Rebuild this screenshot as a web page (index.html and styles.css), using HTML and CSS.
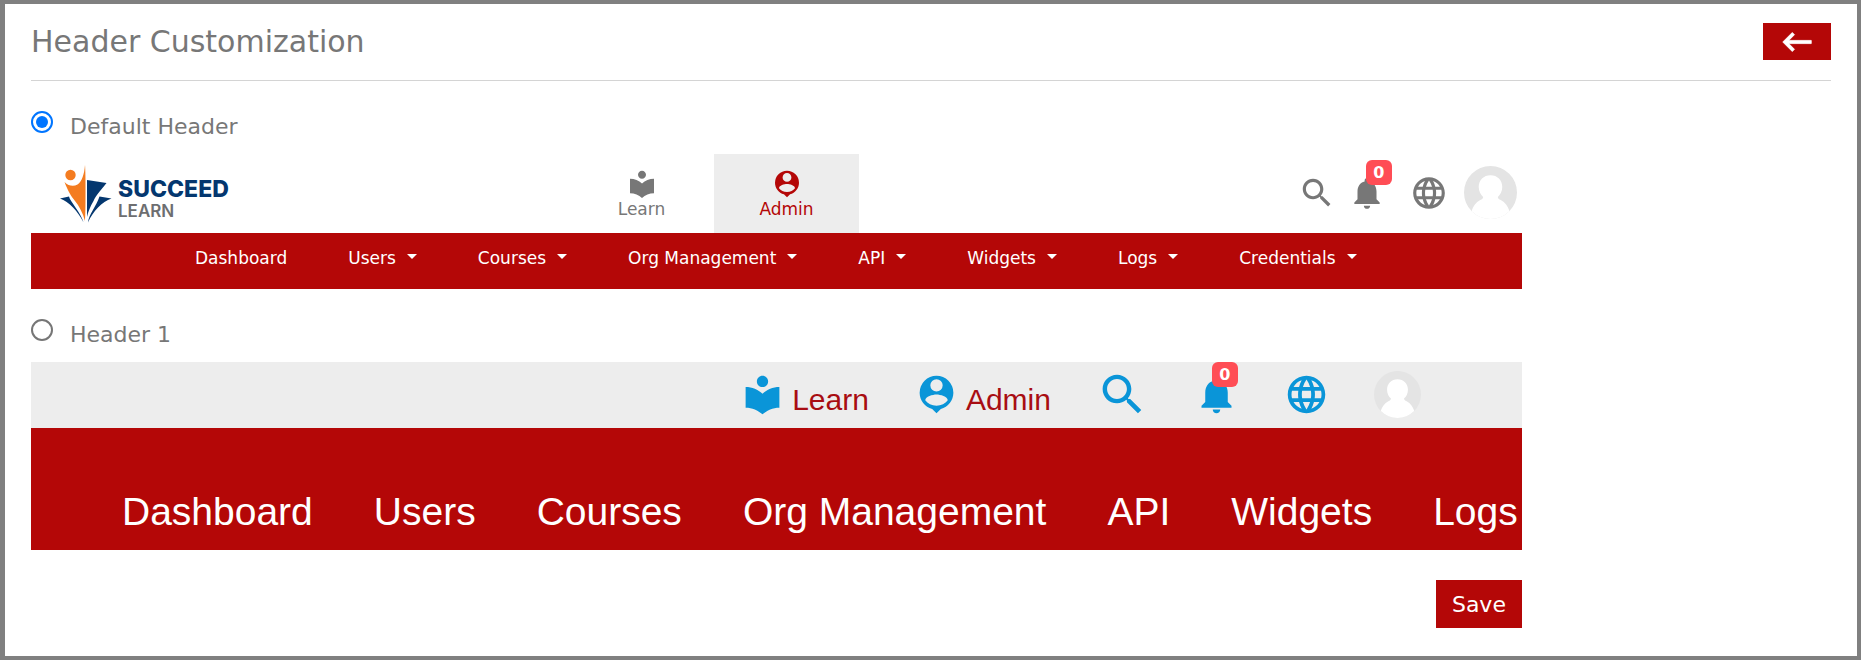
FILE: index.html
```html
<!DOCTYPE html>
<html lang="en">
<head>
<meta charset="utf-8">
<title>Header Customization</title>
<link rel="stylesheet" href="styles.css">
</head>
<body>
<svg class="sprite" aria-hidden="true">
  <symbol id="i-learn" viewBox="0 0 24 24"><path d="M12 11.55C9.64 9.35 6.48 8 3 8v11c3.48 0 6.64 1.35 9 3.55 2.36-2.19 5.52-3.55 9-3.55V8c-3.48 0-6.64 1.35-9 3.55zM12 8c1.66 0 3-1.34 3-3s-1.34-3-3-3-3 1.34-3 3 1.34 3 3 3z"/></symbol>
  <symbol id="i-admin" viewBox="0 0 24 24"><path fill-rule="evenodd" d="M12 2a9 9 0 0 0-9 9c0 4.170 2.840 7.670 6.690 8.690L12 22l2.310-2.310C18.160 18.670 21 15.170 21 11a9 9 0 0 0-9-9zm0 1.800a3.300 3.300 0 1 1 0 6.600 3.300 3.300 0 0 1 0-6.600zM12 18c-2.500 0-4.710-1.100-6-2.900.03-1.990 4-3.080 6-3.080s5.970 1.090 6 3.080C16.710 16.900 14.500 18 12 18z"/></symbol>
  <symbol id="i-search" viewBox="0 0 24 24"><path d="M15.5 14h-.79l-.28-.27C15.41 12.59 16 11.11 16 9.500 16 5.910 13.090 3 9.500 3S3 5.910 3 9.500 5.910 16 9.500 16c1.610 0 3.090-.59 4.230-1.570l.27.28v.79l5 4.990L20.490 19l-4.990-5zm-6 0C7.010 14 5 11.990 5 9.500S7.010 5 9.500 5 14 7.010 14 9.500 11.990 14 9.500 14z"/></symbol>
  <symbol id="i-bell" viewBox="0 0 24 24"><path d="M12 22c1.100 0 2-.9 2-2h-4c0 1.100.89 2 2 2zm6-6v-5c0-3.070-1.640-5.640-4.500-6.320V4c0-.83-.67-1.500-1.500-1.500s-1.500.67-1.500 1.500v.68C7.630 5.360 6 7.920 6 11v5l-2 2v1h16v-1l-2-2z"/></symbol>
  <symbol id="i-globe" viewBox="0 0 24 24"><path d="M11.99 2C6.47 2 2 6.48 2 12s4.47 10 9.99 10C17.52 22 22 17.52 22 12S17.52 2 11.99 2zm6.93 6h-2.95c-.32-1.25-.78-2.45-1.38-3.56 1.84.63 3.37 1.91 4.33 3.56zM12 4.04c.83 1.2 1.48 2.53 1.91 3.96h-3.820c.43-1.430 1.080-2.760 1.910-3.960zM4.26 14C4.1 13.36 4 12.69 4 12s.1-1.360.26-2h3.380c-.08.66-.14 1.320-.14 2 0 .68.06 1.340.14 2H4.26zm.82 2h2.950c.32 1.250.78 2.450 1.380 3.560-1.840-.63-3.370-1.900-4.330-3.560zm2.950-8H5.08c.96-1.660 2.490-2.930 4.330-3.560C8.810 5.550 8.350 6.750 8.030 8zM12 19.960c-.83-1.200-1.480-2.530-1.910-3.960h3.820c-.43 1.430-1.080 2.760-1.910 3.960zM14.340 14H9.660c-.09-.66-.16-1.320-.16-2 0-.68.07-1.350.16-2h4.680c.09.65.16 1.320.16 2 0 .68-.07 1.340-.16 2zm.25 5.560c.6-1.110 1.060-2.310 1.380-3.560h2.950c-.96 1.650-2.490 2.930-4.330 3.560zM16.360 14c.08-.66.14-1.320.14-2 0-.68-.06-1.340-.14-2h3.380c.16.64.26 1.310.26 2s-.1 1.360-.26 2h-3.380z"/></symbol>
  <symbol id="i-avatar" viewBox="0 0 54 54"><clipPath id="avatar-clip"><circle cx="27" cy="27" r="27"/></clipPath><g clip-path="url(#avatar-clip)"><path fill="#e4e4e4" d="M0 0h54v54H0z"/><path fill="#fff" d="M27 9.500c7 0 12 5 12 12 0 4.500-2 8-4.500 10 0 1.500 1 2.200 3 3.200 4.500 2.300 7 6.300 8.500 10.300V54H8v-9c1.500-4 4-8 8.500-10.300 2-1 3-1.700 3-3.200-2.500-2-4.500-5.500-4.500-10 0-7 5-12 12-12z"/></g></symbol>
</svg>
<main class="page">
  <header class="page-head">
    <h1 class="page-title">Header Customization</h1>
    <button class="back" type="button" aria-label="Back">
      <svg class="back-icon" viewBox="0 0 24 24"><path d="M21 11H6.830l3.580-3.590L9 6l-6 6 6 6 1.410-1.410L6.830 13H21z"/></svg>
    </button>
  </header>
  <form class="options">
    <div class="choice">
      <input class="choice-radio" type="radio" name="header" id="header-default" checked>
      <label class="choice-label" for="header-default">Default Header</label>
    </div>
    <section class="preview">
      <div class="top-bar">
        <div class="logo">
          <svg class="logo-mark" viewBox="0 0 52 58">
            <circle cx="10.500" cy="10" r="5.200" fill="#f47c20"/>
            <path fill="#f47c20" d="M25 0c.8 6 .8 50 0 56C23 48 19 41 15 36 11 31 8 26 4.500 17c4 4 9 5 13 2.500C22 16.500 24.300 9 25 0z"/>
            <path fill="#04376f" d="M27 15l19.500 3C42 24 36 30 33.500 36 30 42 28 47 27 52z"/>
            <path fill="#04376f" d="M0 33.500l9-2c1 5 12 16 14.500 26C18 46 9 37 0 33.500zM51.500 33.500l-12-2C36 42 29 49 28 57.500 33 46 42 37 51.500 33.500z"/>
          </svg>
          <div class="logo-text"><span class="logo-name">SUCCEED</span><span class="logo-sub">LEARN</span></div>
        </div>
        <nav class="tabs">
          <a class="tab" href="#"><svg class="icon-tab"><use href="#i-learn"/></svg>Learn</a>
          <a class="tab tab-active" href="#"><svg class="icon-tab"><use href="#i-admin"/></svg>Admin</a>
        </nav>
        <div class="tools">
          <svg class="icon-tool"><use href="#i-search"/></svg>
          <span class="bell"><svg class="icon-tool"><use href="#i-bell"/></svg><span class="badge">0</span></span>
          <svg class="icon-tool tool-globe"><use href="#i-globe"/></svg>
          <svg class="avatar"><use href="#i-avatar"/></svg>
        </div>
      </div>
      <nav class="menu">
        <a class="menu-link" href="#">Dashboard</a>
        <a class="menu-link caret" href="#">Users</a>
        <a class="menu-link caret" href="#">Courses</a>
        <a class="menu-link caret" href="#">Org Management</a>
        <a class="menu-link caret" href="#">API</a>
        <a class="menu-link caret" href="#">Widgets</a>
        <a class="menu-link caret" href="#">Logs</a>
        <a class="menu-link caret" href="#">Credentials</a>
      </nav>
    </section>
    <div class="choice">
      <input class="choice-radio" type="radio" name="header" id="header-one">
      <label class="choice-label" for="header-one">Header 1</label>
    </div>
    <section class="preview preview-large">
      <div class="strip">
        <a class="strip-link" href="#"><svg class="icon-strip"><use href="#i-learn"/></svg><span class="strip-text">Learn</span></a>
        <a class="strip-link" href="#"><svg class="icon-strip"><use href="#i-admin"/></svg><span class="strip-text">Admin</span></a>
        <svg class="icon-search"><use href="#i-search"/></svg>
        <span class="bell"><svg class="icon-strip"><use href="#i-bell"/></svg><span class="badge">0</span></span>
        <svg class="icon-strip"><use href="#i-globe"/></svg>
        <svg class="avatar-small"><use href="#i-avatar"/></svg>
      </div>
      <nav class="big-menu">
        <a class="big-link" href="#">Dashboard</a>
        <a class="big-link" href="#">Users</a>
        <a class="big-link" href="#">Courses</a>
        <a class="big-link" href="#">Org Management</a>
        <a class="big-link" href="#">API</a>
        <a class="big-link" href="#">Widgets</a>
        <a class="big-link" href="#">Logs</a>
      </nav>
    </section>
    <div class="actions"><button class="save" type="submit">Save</button></div>
  </form>
</main>
</body>
</html>
```
FILE: styles.css
```css
* { box-sizing: border-box; }
body {
  margin: 0;
  color: #777;
  background: #fff;
  font-family: Verdana, "DejaVu Sans", sans-serif;
}
a { color: inherit; text-decoration: none; }
svg { display: block; flex: none; fill: currentColor; }
.sprite { position: absolute; width: 0; height: 0; }

.page {
  min-height: 100vh;
  padding: 19px 26px 28px;
  border: 4px solid #808080;
  border-left-width: 5px;
}
.page-head {
  display: flex;
  justify-content: space-between;
  align-items: center;
  padding-bottom: 20px;
  border-bottom: 1px solid #d4d4d4;
}
.page-title { margin: 0; padding-top: 1px; font-size: 30px; line-height: 36px; font-weight: 400; }
.back {
  display: flex;
  justify-content: center;
  align-items: center;
  width: 68px;
  height: 37px;
  padding: 0;
  border: 0;
  color: #fff;
  background: #b40707;
}
.back-icon { width: 38px; height: 38px; stroke: #fff; stroke-width: 0.5; }

.options { width: 82.83%; }
.choice { display: flex; align-items: flex-start; gap: 17px; padding: 30px 0 13px; }
.choice-radio {
  appearance: none;
  width: 22px;
  height: 22px;
  margin: 0;
  padding: 3px;
  border: 2px solid #767676;
  border-radius: 50%;
  background: #fff content-box;
}
.choice-radio::before {
  content: "";
  display: block;
  height: 100%;
  border-radius: 50%;
}
.choice-radio:checked { border-color: #0075ff; }
.choice-radio:checked::before { background: #0075ff; }
.choice-label { padding-top: 2px; font-size: 22px; line-height: 28px; }
.preview { overflow: hidden; }

.top-bar {
  display: grid;
  grid-template-columns: 538px auto 1fr;
  align-items: center;
}
.logo { display: flex; align-items: center; padding-left: 29px; gap: 6px; }
.logo-mark { width: 52px; height: 58px; }
.logo-text { display: flex; flex-direction: column; padding-top: 11px; font-family: Inter, sans-serif; }
.logo-name { color: #04376f; font-size: 23px; line-height: 24px; font-weight: 800; }
.logo-sub { color: #6d6e70; font-size: 17px; line-height: 20px; font-weight: 600; }
.tabs { display: flex; }
.tab {
  display: flex;
  flex-direction: column;
  align-items: center;
  width: 145px;
  height: 79px;
  padding-top: 14px;
  font-size: 17px;
  line-height: 18px;
}
.tab-active { color: #b40707; background: #ededed; }
.icon-tab { width: 32px; height: 32px; }
.tools { display: flex; justify-content: flex-end; align-items: center; padding: 0 5px 2px 0; }
.icon-tool { width: 38px; height: 38px; }
.tools .bell { margin: 0 24px 0 12px; }
.tool-globe { margin-right: 16px; }
.avatar { width: 53px; height: 53px; }
.bell { position: relative; }
.badge {
  position: absolute;
  top: -14px;
  left: 18px;
  width: 26px;
  border-radius: 6px;
  color: #fff;
  background: #ff4d55;
  font-size: 16px;
  line-height: 25px;
  font-weight: 700;
  text-align: center;
}
.menu {
  display: flex;
  gap: 61px;
  height: 56px;
  padding: 13px 0 0 164px;
  color: #fff;
  background: #b40707;
  font-size: 17px;
  line-height: 24px;
  white-space: nowrap;
}
.caret { display: flex; gap: 11px; }
.caret::after {
  content: "";
  margin-top: 8px;
  align-self: flex-start;
  border: 5px solid transparent;
  border-top-color: #fff;
  border-bottom: 0;
}

.preview-large { font-family: Arial, "Liberation Sans", sans-serif; }
.strip {
  display: flex;
  justify-content: flex-end;
  align-items: center;
  gap: 45px;
  height: 66px;
  padding: 0 101px 2px 0;
  color: #0a95d8;
  background: #ededed;
}
.strip-link { display: flex; align-items: center; gap: 7px; }
.strip-text { padding-top: 12px; color: #a80d12; font-size: 30px; line-height: 36px; }
.strip .badge { top: -10px; font-family: Verdana, "DejaVu Sans", sans-serif; }
.icon-strip { width: 45px; height: 45px; }
.icon-search { width: 53px; height: 53px; }
.avatar-small { width: 47px; height: 47px; }
.big-menu {
  display: flex;
  gap: 61px;
  padding: 60px 0 14px 91px;
  color: #fff;
  background: #b40707;
  font-size: 39px;
  line-height: 48px;
  white-space: nowrap;
}
.actions { display: flex; justify-content: flex-end; padding-top: 30px; }
.save {
  height: 48px;
  padding: 0 16px;
  border: 0;
  color: #fff;
  background: #b40707;
  font-family: inherit;
  font-size: 22px;
}
```
